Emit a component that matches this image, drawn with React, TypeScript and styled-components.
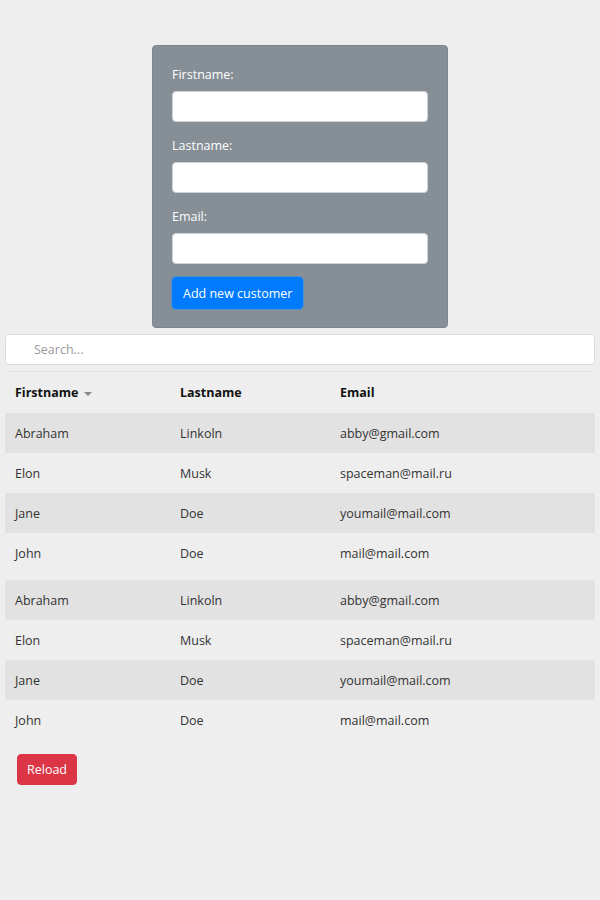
import React from "react";
import styled, { createGlobalStyle } from "styled-components";

const Global = createGlobalStyle`
  html, body { margin: 0; padding: 0; background: #eeeeee; }
  body { font-family: "Open Sans", "Noto Sans", sans-serif; font-size: 12.5px; color: #212529; }
  * { box-sizing: border-box; }
`;

const Page = styled.div`
  padding: 45px 5px 0;
  display: flex;
  flex-direction: column;
`;

const Card = styled.form`
  align-self: center;
  width: 296px;
  background: #868e96;
  border: 1px solid #7d848b;
  border-radius: 4px;
  padding: 19px 19px 18px;
  display: flex;
  flex-direction: column;
`;

const Label = styled.label`
  color: #ffffff;
  font-size: 12.5px;
  line-height: 20px;
  margin-bottom: 6px;
`;

const Input = styled.input`
  width: 256px;
  height: 31px;
  border: 1px solid #ced4da;
  border-radius: 4px;
  background: #fff;
  margin-bottom: 14px;
  &:last-of-type { margin-bottom: 13px; }
`;

const Button = styled.button<{ $variant: "primary" | "danger" }>`
  font-family: inherit;
  font-size: 12.5px;
  color: #fff;
  border-radius: 4px;
  cursor: pointer;
  align-self: flex-start;
  background: ${(p) => (p.$variant === "primary" ? "#007bff" : "#dc3545")};
  border: 1px solid ${(p) => (p.$variant === "primary" ? "#007bff" : "#dc3545")};
  box-shadow: ${(p) => (p.$variant === "primary" ? "0 0 0 1px rgba(38,143,255,0.5)" : "none")};
  height: ${(p) => (p.$variant === "primary" ? "32px" : "31px")};
  padding: ${(p) => (p.$variant === "primary" ? "0 10px" : "0 9px")};
  margin-left: ${(p) => (p.$variant === "primary" ? "0" : "12px")};
  margin-top: ${(p) => (p.$variant === "primary" ? "0" : "14px")};
`;

const Search = styled.input`
  margin-top: 6px;
  width: 590px;
  height: 31px;
  border: 1px solid #dddddd;
  border-radius: 4px;
  background: #fff;
  padding-left: 28px;
  font-family: inherit;
  font-size: 12.5px;
  &::placeholder { color: #9a9a9a; }
`;

const Table = styled.div`
  margin-top: 6px;
  border-top: 1px solid #e4e4e4;
  width: 590px;
`;

const Row = styled.div<{ $striped?: boolean; $head?: boolean }>`
  display: grid;
  grid-template-columns: 165px 160px 1fr;
  height: ${(p) => (p.$head ? "41px" : "40px")};
  align-items: center;
  padding-left: 10px;
  padding-top: ${(p) => (p.$head ? "0" : "1px")};
  background: ${(p) => (p.$striped ? "#e2e2e2" : "transparent")};
  color: ${(p) => (p.$head ? "#111" : "#333")};
  font-weight: ${(p) => (p.$head ? 700 : 400)};
`;

const Group = styled.div`
  & + & { margin-top: 7px; }
`;

const Caret = styled.span`
  display: inline-block;
  width: 0;
  height: 0;
  margin-left: 6px;
  vertical-align: middle;
  border-left: 4px solid transparent;
  border-right: 4px solid transparent;
  border-top: 4px solid #888;
`;

const data = [
  ["Abraham", "Linkoln", "abby@gmail.com"],
  ["Elon", "Musk", "spaceman@mail.ru"],
  ["Jane", "Doe", "youmail@mail.com"],
  ["John", "Doe", "mail@mail.com"],
];

export default function App() {
  return (
    <>
      <Global />
      <Page>
        <Card onSubmit={(e) => e.preventDefault()}>
          <Label>Firstname:</Label>
          <Input />
          <Label>Lastname:</Label>
          <Input />
          <Label>Email:</Label>
          <Input />
          <Button $variant="primary" type="submit">Add new customer</Button>
        </Card>
        <Search placeholder="Search..." />
        <Table>
          <Row $head>
            <span>Firstname<Caret /></span>
            <span>Lastname</span>
            <span>Email</span>
          </Row>
          {[0, 1].map((g) => (
            <Group key={g}>
              {data.map((r, i) => (
                <Row key={i} $striped={i % 2 === 0}>
                  <span>{r[0]}</span>
                  <span>{r[1]}</span>
                  <span>{r[2]}</span>
                </Row>
              ))}
            </Group>
          ))}
        </Table>
        <Button $variant="danger" type="button">Reload</Button>
      </Page>
    </>
  );
}
